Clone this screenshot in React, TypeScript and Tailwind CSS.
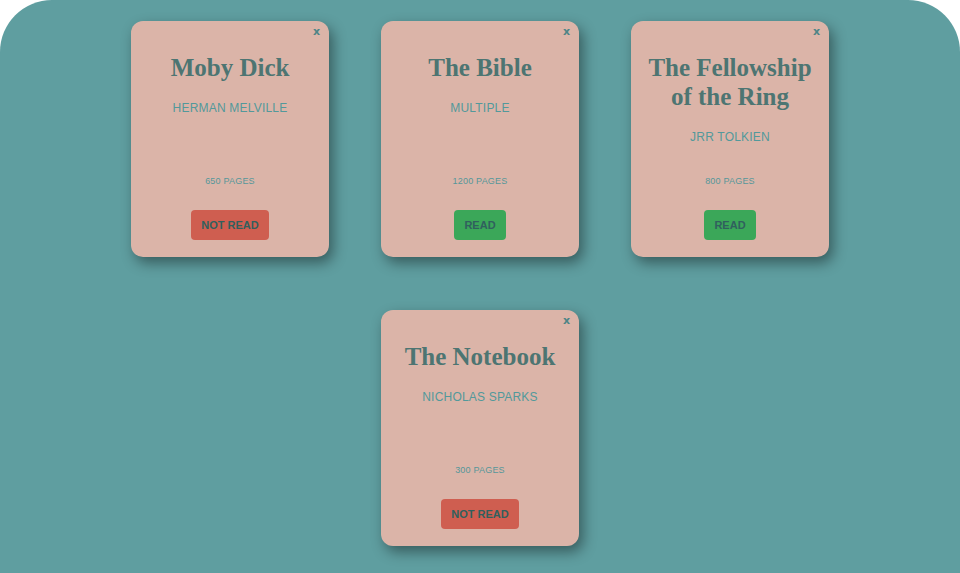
const books = [
  { title: "Moby Dick", author: "Herman Melville", pages: 650, read: false },
  { title: "The Bible", author: "Multiple", pages: 1200, read: true },
  { title: "The Fellowship of the Ring", author: "JRR Tolkien", pages: 800, read: true },
  { title: "The Notebook", author: "Nicholas Sparks", pages: 300, read: false },
];

type Book = (typeof books)[number];

const BookCard = ({ book }: { book: Book }) => {
  return (
    <div className="w-[198px] h-[236px] rounded-[12px] bg-[#dbb4a8] shadow-[4px_6px_14px_rgba(0,0,0,0.42)] flex flex-col items-center px-3 pt-1 pb-[17px]">
      <div className="w-full flex justify-end h-[14px]">
        <button className="text-[11px] leading-[14px] font-bold text-[#4d8486] mr-[-3px] font-['DejaVu_Sans',sans-serif]">
          x
        </button>
      </div>
      <h2 className="mt-[14px] text-center text-[25px] leading-[29px] font-bold text-[#4d7572] font-['Liberation_Serif',serif]">
        {book.title}
      </h2>
      <p className="mt-[17px] text-[12px] leading-[18px] uppercase tracking-[0.2px] text-[#52999b] font-['Liberation_Sans',sans-serif]">
        {book.author}
      </p>
      <div className="flex-1" />
      <p className="text-[9px] leading-[12px] uppercase tracking-[0.2px] text-[#55979a] font-['Liberation_Sans',sans-serif]">
        {book.pages} pages
      </p>
      <button
        className={
          book.read
            ? "mt-[23px] h-[30px] px-[10px] rounded-[4px] bg-[#3ba759] text-[11px] font-bold uppercase text-[#30605e] font-['Liberation_Sans',sans-serif]"
            : "mt-[23px] h-[30px] px-[10px] rounded-[4px] bg-[#cf5e50] text-[11px] font-bold uppercase text-[#30605e] font-['Liberation_Sans',sans-serif]"
        }
      >
        {book.read ? "Read" : "Not Read"}
      </button>
    </div>
  );
};

export default function App() {
  return (
    <div className="w-full h-[573px] bg-white">
      <div className="w-full h-full bg-[#5f9ea0] rounded-t-[52px] pt-[21px]">
        <div className="mx-auto w-[700px] flex flex-wrap justify-center gap-x-[52px] gap-y-[53px]">
          {books.map((b) => (
            <BookCard key={b.title} book={b} />
          ))}
        </div>
      </div>
    </div>
  );
}
